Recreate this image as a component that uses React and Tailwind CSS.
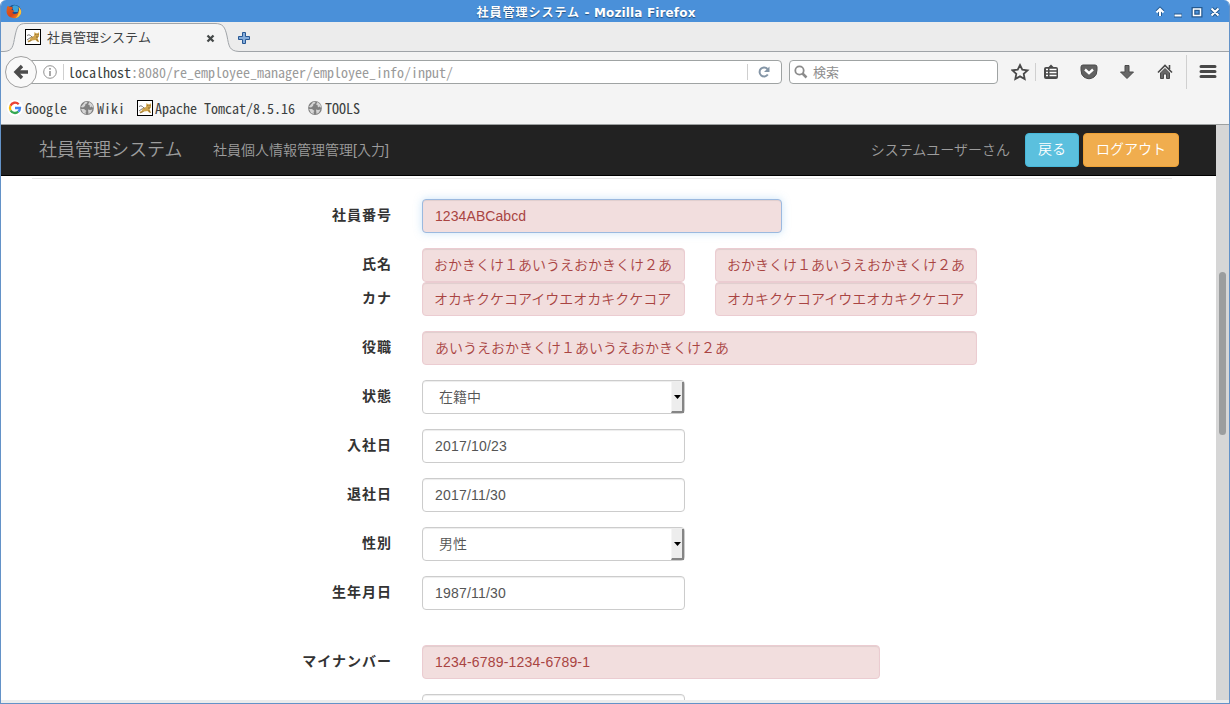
import React from "react";

const mono = "font-['Noto_Sans_Mono_CJK_JP','Noto_Sans_CJK_JP',monospace]";

function FirefoxIcon() {
  return (
    <svg width="16" height="15" viewBox="0 0 15 15" className="shrink-0" preserveAspectRatio="none">
      <defs>
        <linearGradient id="fox" x1="0" y1="0" x2="1" y2="1">
          <stop offset="0" stopColor="#e2661c" />
          <stop offset=".55" stopColor="#d9431a" />
          <stop offset="1" stopColor="#f3a02a" />
        </linearGradient>
      </defs>
      <circle cx="7.8" cy="7" r="6.2" fill="#1c4f8c" />
      <path d="M6 2Q9 0 12 3L11 8H7Z" fill="#3ba4d8" />
      <path d="M1 3Q2 1 3 3Q5 2 6.500 4L5 6Q7 6 8 7Q6 8 6 9Q8 11 11 9Q13 6 12 3Q15 6 14 10Q11 15 6.500 14Q1 13 .5 8Q.5 5 1 3Z" fill="url(#fox)" />
      <path d="M12 3Q15 6 14 9.500Q12 13.500 9 14Q13 10 12 3Z" fill="#f8c63a" />
    </svg>
  );
}

function TomcatIcon() {
  return (
    <svg width="16" height="16" viewBox="0 0 16 16" className="shrink-0">
      <rect x=".5" y=".5" width="15" height="15" fill="#fff" stroke="#000" />
      <path d="M5.500 8L9 7L9.500 3L11 4.300H13L14 3V7.500L12.500 9L14 12.500H12L10.500 11L7 11.500L3 13L2.500 12L5 10.500Z" fill="#d0a44c" />
      <path d="M2 6.500Q4 5 5.500 6.500L7.500 8.500M2 11L5.500 8.500" fill="none" stroke="#77777a" strokeWidth="1" />
      <path d="M3 13L6.500 11.500M11.500 10L13.500 13" fill="none" stroke="#8a6a2c" strokeWidth=".8" />
      <path d="M10.300 5.500H11.300M12.500 5.500H13.500M11 8H13" stroke="#80642f" strokeWidth=".9" />
    </svg>
  );
}

function GoogleIcon() {
  return (
    <svg width="16" height="16" viewBox="0 0 16 16" className="shrink-0" fill="none" strokeWidth="2.3">
      <circle cx="8" cy="8" r="8" fill="#fff" />
      <path d="M11.700 4.200A5 5 0 0 0 3.500 5.700" stroke="#ea4335" />
      <path d="M3.500 5.700A5 5 0 0 0 3.600 10.500" stroke="#fbbc05" />
      <path d="M3.600 10.500A5 5 0 0 0 11.300 11.700" stroke="#34a853" />
      <path d="M11.300 11.700A5 5 0 0 0 13 8H8" stroke="#4285f4" />
    </svg>
  );
}

function GlobeIcon() {
  return (
    <svg width="14" height="14" viewBox="0 0 14 14" className="shrink-0">
      <circle cx="7" cy="7" r="6.900" fill="#808080" />
      <path d="M5 1L7.500 .7L7 2.500L5.500 3L5 5L3 6.500L.8 6ZM9.500 1L12.500 3.500L13.300 7L11.500 5.500L10 6.500L9.500 4L8 3.500ZM1 8L4 8L6.500 10L5.500 11L6 13L3 12ZM8 8.500L10 9L12.500 8.500L11 11.500L8.500 13Z" fill="#d4d4d4" />
    </svg>
  );
}

function TitleBar() {
  return (
    <header className="flex h-[22px] shrink-0 items-center bg-[#4a90d9] pl-[5px] pr-2">
      <FirefoxIcon />
      <div className="flex-1 pt-[3px] text-center font-['DejaVu_Sans','Noto_Sans_CJK_JP',sans-serif] text-[12px] font-bold leading-5 text-white [text-shadow:0_1px_1px_#1d4d80]">
        <span className="pr-[4px]">
          <span className="tracking-[1px]">社員管理システム</span>
          <span className="tracking-[.15px]"> - Mozilla Firefox</span>
        </span>
      </div>
      <svg width="67" height="14" viewBox="0 0 67 14" className="mt-0.5 shrink-0" fill="none">
        <g stroke="#24598f" strokeWidth="4">
          <path d="M6 11V5M3 7L6 4L9 7M20 10.500H28M39.500 4H46.500V10.500H39.500ZM57.500 3.500L64.500 10.500M64.500 3.500L57.500 10.500" />
        </g>
        <g stroke="#fff" strokeWidth="2">
          <path d="M6 11V4M2.500 7.500L6 4L9.500 7.500M20.500 10.500H27.500M57.500 3.500L64.500 10.500M64.500 3.500L57.500 10.500" />
          <path d="M39.500 3.500V10.500H46.500V4H39" strokeWidth="1.500" />
        </g>
      </svg>
    </header>
  );
}

function TabStrip() {
  return (
    <div className="relative h-[30px] shrink-0 bg-[#ececec]">
      <svg width="1228" height="30" className="absolute left-0 top-0">
        <path d="M0 29.500H3C12 29 12 24 14 14C16 5 17 1.500 25 1.500H214C222 1.500 224 5 226 14C228 24 228 29 238 29.500H1228V31H0Z" fill="#f4f4f4" stroke="#a0a4a8" />
      </svg>
      <div className={`relative flex h-[30px] items-center pl-6 text-[13px] text-[#3e4244] ${mono}`}>
        <TomcatIcon />
        <span className="ml-1.5 w-[159px] leading-5">社員管理システム</span>
        <svg width="9" height="9" viewBox="0 0 9 9" className="mt-0.5">
          <path d="M1.500 1.500L7.500 7.500M7.500 1.500L1.500 7.500" stroke="#454949" strokeWidth="2.300" />
        </svg>
        <svg width="12" height="12" viewBox="0 0 12 12" className="ml-[23px] mt-0.5">
          <path d="M4.500 .5H7.500V4.500H11.500V7.500H7.500V11.500H4.500V7.500H.5V4.500H4.500Z" fill="#85addb" stroke="#285894" />
        </svg>
      </div>
    </div>
  );
}

function ToolbarIcons() {
  return (
    <svg width="218" height="34" viewBox="0 0 218 34" className="shrink-0">
      <path d="M9 10L11.300 14.700L16.500 15.300L12.700 18.800L13.700 24L9 21.400L4.300 24L5.300 18.800L1.500 15.300L6.700 14.700Z" fill="none" stroke="#4a4a4a" strokeWidth="1.800" />
      <path d="M24.500 8V26M175.500 0V34" stroke="#d0d0d0" />
      <path d="M35 12H37.500L40 9.500L42.500 12H45Q47 12 47 14V22Q47 24 45 24H35Q33 24 33 22V14Q33 12 35 12Z" fill="#4a4a4a" />
      <path d="M35 14.500H37M38.500 14.500H45.500M35 17.500H37M38.500 17.500H45.500M35 20.500H37M38.500 20.500H45.500" stroke="#fff" strokeWidth="1.500" />
      <path d="M72 10H84Q86 10 86 12V15Q86 20 83 22Q78 25.500 73 22Q70 20 70 15V12Q70 10 72 10Z" fill="#626262" stroke="#4a4a4a" />
      <path d="M74 14.500L78 18.200L82 14.500" fill="none" stroke="#fff" strokeWidth="2.400" />
      <path d="M114 10.500H118V17H122.500L116 23.500L109.500 17H114Z" fill="#686868" stroke="#4a4a4a" />
      <path d="M147 17.500L154 10.500L161 17.500M158.500 10V14" fill="none" stroke="#4a4a4a" strokeWidth="1.600" />
      <path d="M149.500 18L154 13.500L158.500 18V23.500H155.500V19H152.500V23.500H149.500Z" fill="#686868" stroke="#4a4a4a" />
      <path d="M190 11.500H204M190 16.500H204M190 21.500H204" stroke="#484848" strokeWidth="3" strokeLinecap="round" />
    </svg>
  );
}

function NavBar() {
  return (
    <div className={`flex h-10 shrink-0 items-center pl-1 ${mono}`}>
      <div className="z-10 flex h-8 w-8 shrink-0 items-center justify-center rounded-full border border-[#a0a0a0] bg-[#f9f9f9]">
        <svg width="16" height="16" viewBox="0 0 16 16">
          <path d="M9 2L3 8L9 14M3 8H15" fill="none" stroke="#4c4c4c" strokeWidth="3.400" />
        </svg>
      </div>
      <div className="-ml-2 flex h-6 w-[753px] shrink-0 items-center rounded-r-sm border border-[#9fa3a3] bg-white">
        <svg width="14" height="14" viewBox="0 0 14 14" className="ml-[13px]">
          <circle cx="7" cy="7" r="6.300" fill="none" stroke="#929292" />
          <path d="M7 3V4.800M7 6V11" stroke="#929292" strokeWidth="1.600" />
        </svg>
        <div className="ml-1.5 h-4 w-px bg-[#cfcfcf]" />
        <span className="ml-1 flex-1 whitespace-pre text-[14px] leading-5 text-[#9a9a9a]"><span className="text-[#3b3f40]">localhost</span>:8080/re_employee_manager/employee_info/input/</span>
        <div className="h-4 w-px bg-[#cfcfcf]" />
        <svg width="12" height="12" viewBox="0 0 12 12" className="ml-2.5 mr-[11px]">
          <path d="M9.500 3A4.500 4.500 0 1 0 9.800 8.500" fill="none" stroke="#8495a6" strokeWidth="2" />
          <path d="M11.500 .5V6H6Z" fill="#8495a6" />
        </svg>
      </div>
      <div className="ml-[7px] flex h-6 w-[209px] shrink-0 items-center rounded-sm border border-[#9fa3a3] bg-white pl-1">
        <svg width="14" height="14" viewBox="0 0 14 14">
          <circle cx="5.500" cy="5.500" r="4.200" fill="none" stroke="#8b8b8b" strokeWidth="1.800" />
          <path d="M8.500 8.500L12.500 12.500" stroke="#8b8b8b" strokeWidth="2.500" />
        </svg>
        <span className="ml-[5px] text-[13px] leading-5 text-[#8e8e8e]">検索</span>
      </div>
      <div className="ml-[13px]"><ToolbarIcons /></div>
    </div>
  );
}

function Bookmarks() {
  return (
    <div className={`flex h-8 shrink-0 items-center pl-1.5 text-[14px] leading-5 text-[#3b3f40] ${mono}`}>
      <GoogleIcon /><span className="ml-0.5 w-[55px]">Google</span>
      <GlobeIcon /><span className="ml-[3px] w-10">Wiki</span>
      <TomcatIcon /><span className="ml-0.5 w-[153px] whitespace-pre">Apache Tomcat/8.5.16</span>
      <GlobeIcon /><span className="ml-[3px]">TOOLS</span>
    </div>
  );
}

function AppHeader() {
  return (
    <nav className="flex h-[51px] shrink-0 items-center border-b border-black bg-[#222] pb-px pl-[38px] pr-[37px] text-[14px] text-[#9d9d9d]">
      <span className="w-[174px] pt-0.5 text-[18px]">社員管理システム</span>
      <span className="pt-0.5">社員個人情報管理管理[入力]</span>
      <span className="ml-auto mr-[15px] pt-0.5">システムユーザーさん</span>
      <button className="h-[34px] w-[54px] rounded border border-[#46b8da] bg-[#5bc0de] text-white">戻る</button>
      <button className="ml-1 h-[34px] w-24 rounded border border-[#eea236] bg-[#f0ad4e] text-white">ログアウト</button>
    </nav>
  );
}

function Field({ value, error, focused, className }) {
  const tone = error
    ? focused
      ? "border-[#9bb9df] bg-[#f2dede] text-[#a94442] shadow-[inset_0_1px_1px_rgba(0,0,0,.075),0_0_8px_rgba(102,175,233,.35)]"
      : "border-[#ebccd1] bg-[#f2dede] text-[#a94442] shadow-[inset_0_1px_1px_rgba(0,0,0,.075)]"
    : "border-[#ccc] bg-white text-[#555] shadow-[inset_0_1px_1px_rgba(0,0,0,.075)]";
  return <input readOnly value={value} className={`h-[34px] rounded border px-3 outline-none ${tone} ${className}`} />;
}

function Select({ value }) {
  return (
    <div className="flex h-[34px] w-[263px] items-center rounded border border-[#ccc] bg-white pl-4 text-[#555] shadow-[inset_0_1px_1px_rgba(0,0,0,.075)]">
      <span className="flex-1">{value}</span>
      <div className="flex h-[31px] w-[13px] items-center justify-center border-b-2 border-l border-r-2 border-b-[#858585] border-l-[#f5f5f5] border-r-[#858585] bg-[#ededed]">
        <svg width="7" height="4" className="mt-px"><path d="M0 0H7L3.500 4Z" fill="#000" /></svg>
      </div>
    </div>
  );
}

function Row({ label, children, className = "mb-[15px]" }) {
  return (
    <div className={`flex h-[34px] shrink-0 ${className}`}>
      <label className="mr-[30px] w-[391px] pt-[6px] text-right font-bold leading-5 tracking-[1px] text-[#333]">{label}</label>
      <div className="flex">{children}</div>
    </div>
  );
}

const kanaName = "おかきくけ１あいうえおかきくけ２あ";
const kataName = "オカキクケコアイウエオカキクケコア";

export default function App() {
  return (
    <div className="h-[704px] w-[1230px] bg-white">
      <div className="flex h-full flex-col overflow-hidden rounded-t-md border-x border-b border-[#6392c8] bg-[#f4f4f4]">
        <TitleBar />
        <TabStrip />
        <NavBar />
        <Bookmarks />
        <div className="h-px shrink-0 bg-[#9da0a0]" />
        <div className="flex h-[575px] shrink-0 font-['Liberation_Sans','Noto_Sans_CJK_JP',sans-serif] text-[14px] font-[350]">
          <main className="flex h-full w-[1215px] flex-col overflow-hidden bg-white">
            <AppHeader />
            <div className="ml-[31px] mt-0.5 h-px w-[1140px] shrink-0 bg-[#e7e7e7]" />
            <form className="flex flex-col pt-5">
              <Row label="社員番号"><Field value="1234ABCabcd" error focused className="w-[360px] tracking-[.08px]" /></Row>
              <Row label="氏名" className="">
                <Field value={kanaName} error className="w-[263px] px-[11px] pb-0.5" />
                <Field value={kanaName} error className="ml-[30px] w-[262px] px-[11px] pb-0.5" />
              </Row>
              <Row label="カナ">
                <Field value={kataName} error className="w-[263px] px-[11px] pb-0.5" />
                <Field value={kataName} error className="ml-[30px] w-[262px] px-[11px] pb-0.5" />
              </Row>
              <Row label="役職"><Field value="あいうえおかきくけ１あいうえおかきくけ２あ" error className="w-[555px] pb-0.5" /></Row>
              <Row label="状態"><Select value="在籍中" /></Row>
              <Row label="入社日"><Field value="2017/10/23" className="w-[263px] tracking-[.2px]" /></Row>
              <Row label="退社日"><Field value="2017/11/30" className="w-[263px] tracking-[.2px]" /></Row>
              <Row label="性別"><Select value="男性" /></Row>
              <Row label="生年月日" className="mb-[35px]"><Field value="1987/11/30" className="w-[263px] tracking-[.2px]" /></Row>
              <Row label="マイナンバー"><Field value="1234-6789-1234-6789-1" error className="w-[458px] tracking-[.2px]" /></Row>
              <Row label=""><Field value="" className="w-[263px]" /></Row>
            </form>
          </main>
          <aside className="flex w-[13px] justify-center bg-[#d6d6d6] pt-[147px]">
            <div className="h-[163px] w-[7px] rounded-full bg-[#9b9d9e]" />
          </aside>
        </div>
        <div className="h-[3px] shrink-0 bg-[#ececec]" />
      </div>
    </div>
  );
}
